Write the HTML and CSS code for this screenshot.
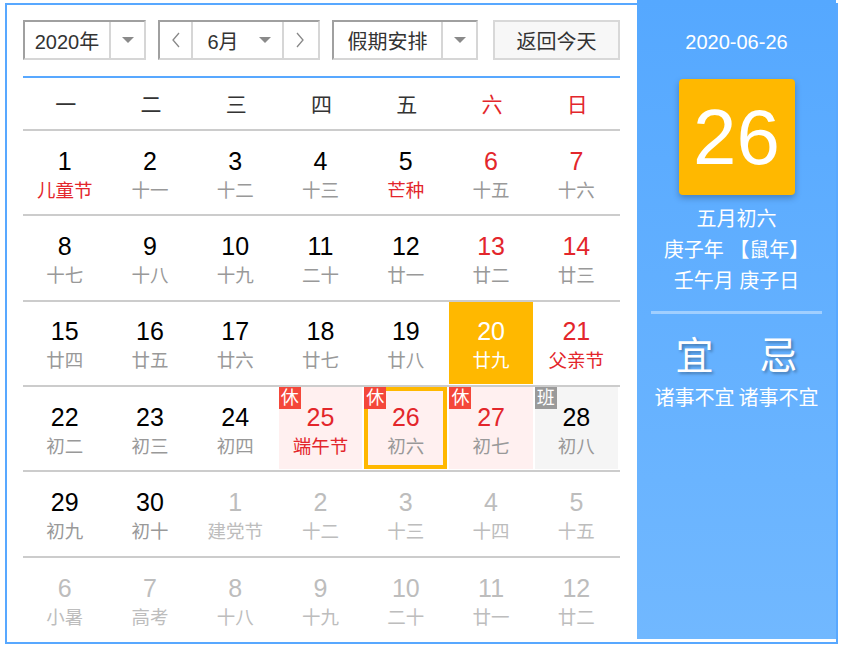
FILE: index.html
```html
<!DOCTYPE html>
<html lang="zh-CN">
<head>
<meta charset="utf-8">
<title>万年历</title>
<link rel="stylesheet" href="styles.css">
</head>
<body>
<div class="wrap">
  <div class="main">
    <div class="toolbar">
      <div class="sel sel-year">
        <span class="sel-text">2020年</span>
        <span class="sel-arrow"><i class="tri"></i></span>
      </div>
      <div class="sel sel-month">
        <span class="nav"><svg width="10" height="16" viewBox="0 0 10 16"><polyline points="8,1 2,8 8,15" fill="none" stroke="#888" stroke-width="1.3"/></svg></span>
        <span class="sel-text month-text">6月</span>
        <span class="month-arrow"><i class="tri"></i></span>
        <span class="nav nav-r"><svg width="10" height="16" viewBox="0 0 10 16"><polyline points="2,1 8,8 2,15" fill="none" stroke="#888" stroke-width="1.3"/></svg></span>
      </div>
      <div class="sel sel-holiday">
        <span class="sel-text">假期安排</span>
        <span class="sel-arrow"><i class="tri"></i></span>
      </div>
      <div class="btn-today">返回今天</div>
    </div>
    <div class="blue-line"></div>
    <div class="week">
      <span>一</span><span>二</span><span>三</span><span>四</span><span>五</span><span class="red">六</span><span class="red">日</span>
    </div>
    <div class="row">
      <div class="cell"><div class="day"><b class="num">1</b><span class="lunar fest">儿童节</span></div></div>
      <div class="cell"><div class="day"><b class="num">2</b><span class="lunar">十一</span></div></div>
      <div class="cell"><div class="day"><b class="num">3</b><span class="lunar">十二</span></div></div>
      <div class="cell"><div class="day"><b class="num">4</b><span class="lunar">十三</span></div></div>
      <div class="cell"><div class="day"><b class="num">5</b><span class="lunar fest">芒种</span></div></div>
      <div class="cell"><div class="day"><b class="num red">6</b><span class="lunar">十五</span></div></div>
      <div class="cell"><div class="day"><b class="num red">7</b><span class="lunar">十六</span></div></div>
    </div>
    <div class="row">
      <div class="cell"><div class="day"><b class="num">8</b><span class="lunar">十七</span></div></div>
      <div class="cell"><div class="day"><b class="num">9</b><span class="lunar">十八</span></div></div>
      <div class="cell"><div class="day"><b class="num">10</b><span class="lunar">十九</span></div></div>
      <div class="cell"><div class="day"><b class="num">11</b><span class="lunar">二十</span></div></div>
      <div class="cell"><div class="day"><b class="num">12</b><span class="lunar">廿一</span></div></div>
      <div class="cell"><div class="day"><b class="num red">13</b><span class="lunar">廿二</span></div></div>
      <div class="cell"><div class="day"><b class="num red">14</b><span class="lunar">廿三</span></div></div>
    </div>
    <div class="row">
      <div class="cell"><div class="day"><b class="num">15</b><span class="lunar">廿四</span></div></div>
      <div class="cell"><div class="day"><b class="num">16</b><span class="lunar">廿五</span></div></div>
      <div class="cell"><div class="day"><b class="num">17</b><span class="lunar">廿六</span></div></div>
      <div class="cell"><div class="day"><b class="num">18</b><span class="lunar">廿七</span></div></div>
      <div class="cell"><div class="day"><b class="num">19</b><span class="lunar">廿八</span></div></div>
      <div class="cell"><div class="day today"><b class="num">20</b><span class="lunar">廿九</span></div></div>
      <div class="cell"><div class="day"><b class="num red">21</b><span class="lunar fest">父亲节</span></div></div>
    </div>
    <div class="row">
      <div class="cell"><div class="day"><b class="num">22</b><span class="lunar">初二</span></div></div>
      <div class="cell"><div class="day"><b class="num">23</b><span class="lunar">初三</span></div></div>
      <div class="cell"><div class="day"><b class="num">24</b><span class="lunar">初四</span></div></div>
      <div class="cell"><div class="day rest"><i class="badge">休</i><b class="num red">25</b><span class="lunar fest">端午节</span></div></div>
      <div class="cell"><div class="day rest picked"><i class="badge">休</i><b class="num red">26</b><span class="lunar">初六</span></div></div>
      <div class="cell"><div class="day rest"><i class="badge">休</i><b class="num red">27</b><span class="lunar">初七</span></div></div>
      <div class="cell"><div class="day work"><i class="badge badge-work">班</i><b class="num">28</b><span class="lunar">初八</span></div></div>
    </div>
    <div class="row">
      <div class="cell"><div class="day"><b class="num">29</b><span class="lunar">初九</span></div></div>
      <div class="cell"><div class="day"><b class="num">30</b><span class="lunar">初十</span></div></div>
      <div class="cell"><div class="day other"><b class="num">1</b><span class="lunar">建党节</span></div></div>
      <div class="cell"><div class="day other"><b class="num">2</b><span class="lunar">十二</span></div></div>
      <div class="cell"><div class="day other"><b class="num">3</b><span class="lunar">十三</span></div></div>
      <div class="cell"><div class="day other"><b class="num">4</b><span class="lunar">十四</span></div></div>
      <div class="cell"><div class="day other"><b class="num">5</b><span class="lunar">十五</span></div></div>
    </div>
    <div class="row last">
      <div class="cell"><div class="day other"><b class="num">6</b><span class="lunar">小暑</span></div></div>
      <div class="cell"><div class="day other"><b class="num">7</b><span class="lunar">高考</span></div></div>
      <div class="cell"><div class="day other"><b class="num">8</b><span class="lunar">十八</span></div></div>
      <div class="cell"><div class="day other"><b class="num">9</b><span class="lunar">十九</span></div></div>
      <div class="cell"><div class="day other"><b class="num">10</b><span class="lunar">二十</span></div></div>
      <div class="cell"><div class="day other"><b class="num">11</b><span class="lunar">廿一</span></div></div>
      <div class="cell"><div class="day other"><b class="num">12</b><span class="lunar">廿二</span></div></div>
    </div>
  </div>
  <div class="side">
    <div class="side-date">2020-06-26</div>
    <div class="big-day">26</div>
    <div class="side-lunar">
      <div>五月初六</div>
      <div>庚子年 【鼠年】</div>
      <div>壬午月 庚子日</div>
    </div>
    <div class="side-sep"></div>
    <div class="yiji">
      <div class="yj-col"><div class="yj-title">宜</div><div class="yj-text">诸事不宜</div></div>
      <div class="yj-col"><div class="yj-title">忌</div><div class="yj-text">诸事不宜</div></div>
    </div>
  </div>
</div>
</body>
</html>
```
FILE: styles.css
```css
* { box-sizing: border-box; }
body {
  margin: 0;
  font-family: "Liberation Sans", "Noto Sans CJK SC", sans-serif;
  color: #333;
  background: #fff;
}
.wrap {
  margin: 3px 0 0 5px;
  width: 833px;
  height: 641px;
  border: 2px solid #58a8ff;
  display: flex;
}
.main {
  width: 630px;
  padding: 15px 17px 0 16px;
}
.toolbar {
  display: flex;
  height: 40px;
}
.sel {
  display: flex;
  height: 40px;
  border: 2px solid;
  border-color: #a0a0a0 #d6d6d6 #d6d6d6 #a0a0a0;
  background: #fff;
  font-size: 20px;
  color: #333;
  align-items: stretch;
}
.sel-text {
  display: flex;
  align-items: center;
  justify-content: center;
}
.sel-arrow {
  display: flex;
  align-items: center;
  justify-content: center;
  width: 35px;
  border-left: 2px solid #d6d6d6;
}
.tri {
  display: block;
  width: 0;
  height: 0;
  border-left: 6px solid transparent;
  border-right: 6px solid transparent;
  border-top: 6px solid #8a8a8a;
}
.sel-year { width: 123px; }
.sel-year .sel-text { width: 84px; }
.sel-month { width: 162px; margin-left: 12px; }
.nav {
  width: 33px;
  display: flex;
  align-items: center;
  justify-content: center;
  border-right: 2px solid #d6d6d6;
}
.nav-r { border-right: 0; border-left: 2px solid #d6d6d6; }
.month-text { width: 52px; padding-left: 8px; }
.month-arrow {
  width: 37px;
  display: flex;
  align-items: center;
  justify-content: center;
  padding-left: 2px;
}
.sel-holiday { width: 146px; margin-left: 12px; }
.sel-holiday .sel-text { width: 107px; }
.btn-today {
  width: 127px;
  margin-left: 15px;
  height: 40px;
  border: 2px solid #d8d8d8;
  background: #f7f7f7;
  font-size: 20px;
  color: #333;
  display: flex;
  align-items: center;
  justify-content: center;
}
.blue-line {
  margin-top: 16px;
  height: 2px;
  background: #58a8ff;
}
.week {
  display: grid;
  grid-template-columns: repeat(7, 1fr);
  height: 53px;
  border-bottom: 2px solid #cccccc;
  align-items: center;
  font-size: 21px;
  color: #333;
  text-align: center;
  padding-bottom: 2px;
}
.red { color: #e3262b; }
.row {
  display: grid;
  grid-template-columns: repeat(7, 1fr);
  height: 85.33px;
  border-bottom: 2px solid #cccccc;
}
.row.last { border-bottom: 0; }
.cell { display: flex; }
.day {
  position: relative;
  flex: 1;
  margin: 0 2px 1px 0;
  display: flex;
  flex-direction: column;
  align-items: center;
  justify-content: center;
  padding-top: 5px;
}
.num {
  font-weight: normal;
  font-size: 25px;
  line-height: 28px;
  color: #000;
}
.num.red { color: #e3262b; }
.lunar {
  font-size: 18.5px;
  line-height: 24px;
  margin-top: 4px;
  color: #999;
}
.lunar.fest { color: #e3262b; }
.today { background: #ffb800; }
.today .num, .today .lunar { color: #fff; }
.rest { background: #fff0f0; }
.picked { box-shadow: inset 0 0 0 4px #ffb800; }
.work { background: #f5f5f5; }
.other .num, .other .lunar { color: #bdbdbd; }
.badge {
  position: absolute;
  left: 0;
  top: 0;
  width: 22px;
  height: 22px;
  background: #f4473a;
  color: #fff;
  font-style: normal;
  font-size: 18px;
  line-height: 22px;
  text-align: center;
}
.badge-work { background: #9a9a9a; }
.side {
  width: 200px;
  height: 639px;
  margin-top: -5px;
  background: linear-gradient(#55a8ff, #71b8ff);
  color: #fff;
  display: flex;
  flex-direction: column;
  align-items: center;
}
.side-date {
  margin-top: 31px;
  font-size: 20px;
  line-height: 22px;
}
.big-day {
  margin-top: 26px;
  width: 116px;
  height: 116px;
  border-radius: 4px;
  background: #ffb800;
  box-shadow: 0 3px 6px rgba(0, 0, 0, 0.25);
  font-size: 78px;
  line-height: 116px;
  text-align: center;
  color: #fff;
}
.side-lunar {
  margin-top: 9px;
  font-size: 20px;
  line-height: 31px;
  text-align: center;
}
.side-sep {
  margin-top: 14px;
  width: 171px;
  height: 3px;
  background: rgba(255, 255, 255, 0.4);
}
.yiji {
  display: flex;
  margin-top: 20px;
}
.yj-col {
  width: 84px;
  text-align: center;
}
.yj-title {
  font-size: 38px;
  line-height: 44px;
  text-shadow: 2px 2px 3px rgba(0, 0, 0, 0.3);
}
.yj-text {
  margin-top: 7px;
  font-size: 20px;
  line-height: 26px;
  white-space: nowrap;
}
```
